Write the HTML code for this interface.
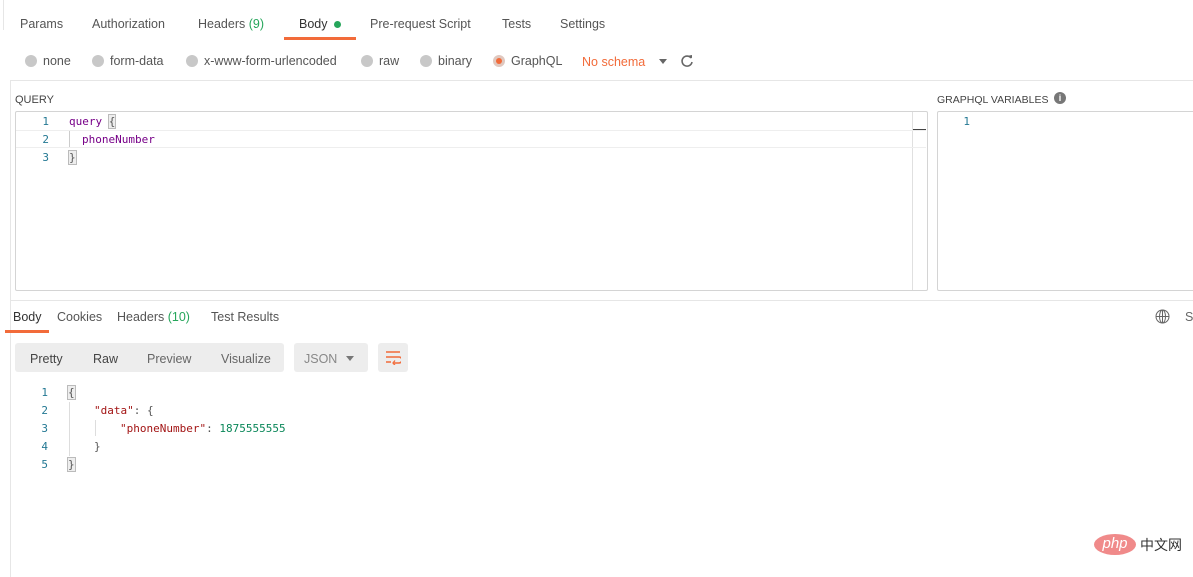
<!DOCTYPE html>
<html><head><meta charset="utf-8"><style>
*{margin:0;padding:0;box-sizing:border-box}
body{width:1193px;height:577px;background:#fff;position:relative;overflow:hidden;font-family:"Liberation Sans",sans-serif;font-size:12.5px;color:#555}
.a{position:absolute;white-space:nowrap}
.mono{font-family:"DejaVu Sans Mono","Liberation Mono",monospace;font-size:11px}
.ln{color:#237893;width:20px;text-align:right}
.rad{position:absolute;width:12px;height:12px;border-radius:50%;background:#c8c8c8}
.g{color:#26a65b}
</style></head><body>
<div class="a" style="left:3px;top:0;width:1px;height:30px;background:#e6e6e6"></div>
<div class="a" style="left:10px;top:80px;width:1px;height:497px;background:#e6e6e6"></div>
<!-- tabs -->
<div class="a" style="left:20px;top:17px">Params</div>
<div class="a" style="left:92px;top:17px">Authorization</div>
<div class="a" style="left:198px;top:17px">Headers <span class="g">(9)</span></div>
<div class="a" style="left:299px;top:17px;color:#333">Body</div>
<div class="a" style="left:334px;top:21px;width:7px;height:7px;border-radius:50%;background:#26a65b"></div>
<div class="a" style="left:284px;top:37px;width:72px;height:3px;background:#f26b3a"></div>
<div class="a" style="left:370px;top:17px">Pre-request Script</div>
<div class="a" style="left:502px;top:17px">Tests</div>
<div class="a" style="left:560px;top:17px">Settings</div>
<!-- radios -->
<div class="rad" style="left:25px;top:55px"></div><div class="a" style="left:43px;top:54px">none</div>
<div class="rad" style="left:92px;top:55px"></div><div class="a" style="left:110px;top:54px">form-data</div>
<div class="rad" style="left:186px;top:55px"></div><div class="a" style="left:204px;top:54px">x-www-form-urlencoded</div>
<div class="rad" style="left:361px;top:55px"></div><div class="a" style="left:379px;top:54px">raw</div>
<div class="rad" style="left:420px;top:55px"></div><div class="a" style="left:438px;top:54px">binary</div>
<div class="rad" style="left:493px;top:55px;background:#e0c8bf"></div><div class="a" style="left:496px;top:58px;width:6px;height:6px;border-radius:50%;background:#f26b3a"></div>
<div class="a" style="left:511px;top:54px">GraphQL</div>
<div class="a" style="left:582px;top:55px;color:#f26b3a">No schema</div>
<div class="a" style="left:659px;top:59px;width:0;height:0;border-left:4px solid transparent;border-right:4px solid transparent;border-top:5px solid #666"></div>
<svg class="a" style="left:680px;top:54px" width="14" height="14" viewBox="0 0 14 14"><path d="M11 4A5 5 0 1 0 12 8" fill="none" stroke="#666" stroke-width="1.6"/><path d="M9 1.5l3 3V1z" fill="#666"/></svg>
<div class="a" style="left:10px;top:80px;width:1183px;height:1px;background:#e6e6e6"></div>
<!-- query -->
<div class="a" style="left:15px;top:94px;font-size:11px;color:#444">QUERY</div>
<div class="a" style="left:15px;top:111px;width:913px;height:180px;border:1px solid #d4d4d4;border-radius:2px"></div>
<div class="a" style="left:912px;top:112px;width:1px;height:178px;background:#e0e0e0"></div>
<div class="a" style="left:913px;top:129px;width:13px;height:2px;background:#444"></div>
<div class="a" style="left:16px;top:130px;width:910px;height:18px;border-top:1px solid #eee;border-bottom:1px solid #eee"></div>
<div class="a" style="left:69px;top:131px;width:1px;height:16px;background:#ccc"></div>
<div class="a mono ln" style="left:29px;top:115px">1</div>
<div class="a mono ln" style="left:29px;top:133px">2</div>
<div class="a mono ln" style="left:29px;top:151px">3</div>
<div class="a mono" style="left:69px;top:115px"><span style="color:#708">query</span> <span style="outline:1px solid #bbb;background:#eee">{</span></div>
<div class="a mono" style="left:82px;top:133px;color:#708">phoneNumber</div>
<div class="a mono" style="left:69px;top:151px"><span style="outline:1px solid #bbb;background:#eee">}</span></div>
<!-- variables -->
<div class="a" style="left:937px;top:94px;font-size:10.5px;color:#444">GRAPHQL VARIABLES</div>
<div class="a" style="left:1054px;top:92px;width:12px;height:12px;border-radius:50%;background:#777;color:#fff;font-size:9px;font-weight:bold;text-align:center;line-height:12px">i</div>
<div class="a" style="left:937px;top:111px;width:260px;height:180px;border:1px solid #d4d4d4;border-radius:2px"></div>
<div class="a mono ln" style="left:950px;top:115px">1</div>
<div class="a" style="left:10px;top:300px;width:1183px;height:1px;background:#e6e6e6"></div>
<!-- response -->
<div class="a" style="left:13px;top:310px;color:#333">Body</div>
<div class="a" style="left:5px;top:330px;width:44px;height:3px;background:#f26b3a"></div>
<div class="a" style="left:57px;top:310px">Cookies</div>
<div class="a" style="left:117px;top:310px">Headers <span class="g">(10)</span></div>
<div class="a" style="left:211px;top:310px">Test Results</div>
<svg class="a" style="left:1155px;top:309px" width="15" height="15" viewBox="0 0 15 15" fill="none" stroke="#666" stroke-width="1"><circle cx="7.5" cy="7.5" r="6.5"/><ellipse cx="7.5" cy="7.5" rx="3" ry="6.5"/><path d="M1 7.5h13M7.5 1v13"/></svg>
<div class="a" style="left:1185px;top:310px;color:#666">St</div>
<div class="a" style="left:15px;top:343px;width:269px;height:29px;background:#ededed;border-radius:3px"></div>
<div class="a" style="left:30px;top:352px;color:#444">Pretty</div>
<div class="a" style="left:93px;top:352px;color:#444">Raw</div>
<div class="a" style="left:147px;top:352px;color:#666">Preview</div>
<div class="a" style="left:221px;top:352px;color:#666">Visualize</div>
<div class="a" style="left:294px;top:343px;width:74px;height:29px;background:#ededed;border-radius:3px"></div>
<div class="a" style="left:304px;top:352px;color:#888">JSON</div>
<div class="a" style="left:346px;top:356px;width:0;height:0;border-left:4px solid transparent;border-right:4px solid transparent;border-top:5px solid #777"></div>
<div class="a" style="left:378px;top:343px;width:30px;height:29px;background:#ededed;border-radius:3px"></div>
<svg class="a" style="left:385px;top:350px" width="16" height="15" viewBox="0 0 16 15" fill="none" stroke="#f26b3a" stroke-width="1.6"><path d="M1 2h14M1 7h13a3 3 0 0 1 0 6H9M1 12h5"/><path d="M10 10.5l-2 2.5 2 2.3" stroke-width="1.3"/></svg>
<div class="a mono ln" style="left:28px;top:386px">1</div>
<div class="a mono ln" style="left:28px;top:404px">2</div>
<div class="a mono ln" style="left:28px;top:422px">3</div>
<div class="a mono ln" style="left:28px;top:440px">4</div>
<div class="a mono ln" style="left:28px;top:458px">5</div>
<div class="a" style="left:69px;top:402px;width:1px;height:54px;background:#ddd"></div>
<div class="a" style="left:95px;top:420px;width:1px;height:16px;background:#ddd"></div>
<div class="a mono" style="left:68px;top:386px"><span style="outline:1px solid #bbb;background:#eee">{</span></div>
<div class="a mono" style="left:94px;top:404px"><span style="color:#a31515">"data"</span>: {</div>
<div class="a mono" style="left:120px;top:422px"><span style="color:#a31515">"phoneNumber"</span>: <span style="color:#098658">1875555555</span></div>
<div class="a mono" style="left:94px;top:440px">}</div>
<div class="a mono" style="left:68px;top:458px"><span style="outline:1px solid #bbb;background:#eee">}</span></div>
<!-- watermark -->
<div class="a" style="left:1094px;top:534px;width:42px;height:21px;border-radius:50%;background:#f08a8a;color:#fff;font-style:italic;font-size:15px;text-align:center;line-height:20px">php</div>
<div class="a" style="left:1140px;top:535px;font-family:'Noto Sans CJK SC',sans-serif;font-size:14px;color:#333">中文网</div>
</body></html>
